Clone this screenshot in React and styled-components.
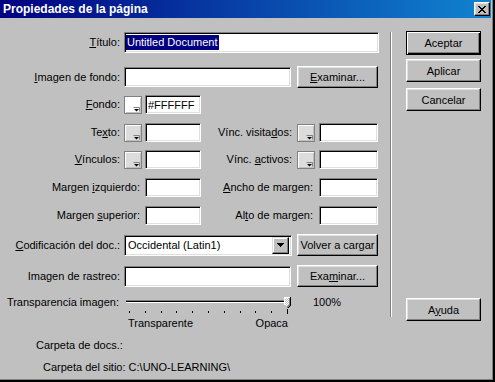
import React from 'react';
import styled, { createGlobalStyle, css } from 'styled-components';

const Global = createGlobalStyle`
  html, body { margin: 0; padding: 0; background: #c0c0c0; }
  body { font-family: "Liberation Sans", Arial, sans-serif; font-size: 11px; color: #000; }
`;

const Window = styled.div`
  box-sizing: border-box;
  width: 495px;
  height: 382px;
  display: flex;
  flex-direction: column;
  background: #c0c0c0;
  border-right: 2px solid #000;
  border-bottom: 2px solid #000;
  padding: 0 2px 2px 0;
  box-shadow: inset -1px -1px 0 #808080;
`;

const TitleBar = styled.div`
  flex: none;
  height: 18px;
  display: flex;
  align-items: center;
  justify-content: space-between;
  padding: 0 1px 0 3px;
  background: linear-gradient(to right, #000080, #1084d0);
  color: #fff;
  font-weight: bold;
  font-size: 12px;
`;

const TitleText = styled.span`
  white-space: nowrap;
`;

const CloseButton = styled.div`
  box-sizing: border-box;
  width: 16px;
  height: 14px;
  background: #c0c0c0;
  border: 1px solid;
  border-color: #fff #000 #000 #fff;
  box-shadow: inset -1px -1px 0 #808080, inset 1px 1px 0 #dfdfdf;
  display: flex;
  align-items: center;
  justify-content: center;
`;

const Body = styled.div`
  flex: 1;
  display: flex;
`;

const Main = styled.div`
  box-sizing: border-box;
  width: 390px;
  display: flex;
  flex-direction: column;
  padding-top: 14px;
`;

const Divider = styled.div`
  flex: none;
  width: 0;
  height: 285px;
  margin-top: 14px;
  border-left: 1px solid #808080;
  border-right: 1px solid #fff;
`;

const Side = styled.div`
  display: flex;
  flex-direction: column;
  padding: 13px 0 0 14px;
`;

const Row = styled.div`
  display: flex;
  align-items: ${p => p.$align || 'center'};
  height: ${p => p.$h}px;
  margin-top: ${p => p.$mt || 0}px;
`;

const Label = styled.div`
  box-sizing: border-box;
  flex: none;
  width: ${p => p.$w}px;
  padding-right: ${p => p.$pr ?? 4}px;
  text-align: right;
  white-space: nowrap;
  line-height: 13px;
`;

const U = styled.span`
  text-decoration: underline;
  text-underline-offset: 1px;
`;

const Field = styled.div`
  box-sizing: border-box;
  flex: none;
  width: ${p => p.$w}px;
  height: ${p => p.$h || 19}px;
  margin-left: ${p => p.$ml || 0}px;
  background: #fff;
  border: 1px solid;
  border-color: #808080 #fff #fff #808080;
  box-shadow: inset 1px 1px 0 #000, inset -1px -1px 0 #dfdfdf;
  padding: 0 2px;
  display: flex;
  align-items: center;
  white-space: nowrap;
  overflow: hidden;
`;

const Selected = styled.span`
  display: inline-block;
  margin-left: -1px;
  padding: 0 1px 0 1px;
  height: 15px;
  line-height: 15px;
  background: #000080;
  color: #fff;
`;

const SelectBox = styled(Field)`
  justify-content: space-between;
  padding: 0 2px 0 3px;
`;

const DropButton = styled.div`
  box-sizing: border-box;
  width: 17px;
  height: 17px;
  background: #c0c0c0;
  border: 1px solid;
  border-color: #dfdfdf #000 #000 #dfdfdf;
  box-shadow: inset -1px -1px 0 #808080, inset 1px 1px 0 #fff;
  display: flex;
  align-items: center;
  justify-content: center;
`;

const Swatch = styled.div`
  position: relative;
  box-sizing: border-box;
  flex: none;
  width: 18px;
  height: 18px;
  background: ${p => p.$fill};
  border: 1px solid #808080;
  box-shadow: inset 1px 1px 0 #fff, inset -1px -1px 0 #c0c0c0;
`;

const SwatchArrow = styled.svg`
  position: absolute;
  right: 1px;
  bottom: 1px;
`;

const Button = styled.div`
  box-sizing: border-box;
  flex: none;
  width: ${p => p.$w || 75}px;
  height: ${p => p.$h || 23}px;
  margin-top: ${p => p.$mt || 0}px;
  margin-left: ${p => p.$ml || 0}px;
  background: #c0c0c0;
  border: 1px solid;
  border-color: #fff #000 #000 #fff;
  box-shadow: inset -1px -1px 0 #808080, inset 1px 1px 0 #dfdfdf;
  display: flex;
  align-items: center;
  justify-content: center;
  white-space: nowrap;
  ${p => p.$default && css`
    border-color: #000;
    box-shadow: inset 1px 1px 0 #fff, inset -1px -1px 0 #000, inset -2px -2px 0 #808080;
  `}
`;

const SliderBlock = styled.div`
  position: relative;
  flex: none;
  width: 167px;
  display: flex;
  flex-direction: column;
`;

const Track = styled.div`
  box-sizing: border-box;
  width: 164px;
  height: 3px;
  margin: 4px 0 0 2px;
  background: #000;
  border-top: 1px solid #808080;
  border-bottom: 1px solid #fff;
`;

const Thumb = styled.svg`
  position: absolute;
  left: 160px;
  top: 1px;
`;

const Ticks = styled.div`
  display: flex;
  justify-content: space-between;
  align-items: center;
  width: 159px;
  height: 5px;
  margin: 6px 0 0 5px;
`;

const Tick = styled.div`
  width: 1px;
  height: ${p => (p.$long ? 5 : 2)}px;
  background: #000;
`;

const ScaleLabels = styled.div`
  display: flex;
  justify-content: space-between;
  margin-top: 3px;
  padding: 0 3px 0 4px;
  line-height: 13px;
`;

const Percent = styled.div`
  margin-left: 22px;
  line-height: 13px;
`;

const InfoLine = styled.div`
  margin-top: 9px;
  padding-left: ${p => p.$pl}px;
  line-height: 13px;
  white-space: nowrap;
`;

const Spacer = styled.div`
  height: ${p => p.$h}px;
`;

function ColorButton({ fill = '#dcdcdc' }) {
  return (
    <Swatch $fill={fill}>
      <SwatchArrow width="7" height="5" viewBox="0 0 7 5">
        <path d="M0.5 0.5 H6.5 V4.5" fill="none" stroke="#808080" />
        <path d="M1 2 H6 L3.5 4.5 Z" fill="#000" />
      </SwatchArrow>
    </Swatch>
  );
}

function ColorRow({ mt, left, right }) {
  return (
    <Row $h={19} $mt={mt}>
      <Label $w={124}>{left}</Label>
      <ColorButton />
      <Field $w={56} $ml={3} />
      <Label $w={96} $pr={5}>{right}</Label>
      <ColorButton />
      <Field $w={59} $ml={4} />
    </Row>
  );
}

function MarginRow({ mt, left, right }) {
  return (
    <Row $h={19} $mt={mt}>
      <Label $w={145} $pr={5}>{left}</Label>
      <Field $w={56} />
      <Label $w={118} $pr={6}>{right}</Label>
      <Field $w={59} />
    </Row>
  );
}

export default function App() {
  const ticks = Array.from({ length: 11 }, (_, i) => i);
  return (
    <>
      <Global />
      <Window>
        <TitleBar>
          <TitleText>Propiedades de la página</TitleText>
          <CloseButton>
            <svg width="8" height="7" viewBox="0 0 8 7" shapeRendering="crispEdges">
              <path d="M0 0h2v1h-2zM6 0h2v1h-2zM1 1h2v1h-2zM5 1h2v1h-2zM2 2h4v1h-4zM3 3h2v1h-2zM2 4h4v1h-4zM1 5h2v1h-2zM5 5h2v1h-2zM0 6h2v1h-2zM6 6h2v1h-2z" fill="#000" />
            </svg>
          </CloseButton>
        </TitleBar>
        <Body>
          <Main>
            <Row $h={21}>
              <Label $w={124}><U>T</U>ítulo:</Label>
              <Field $w={255} $h={21}><Selected>Untitled Document</Selected></Field>
            </Row>
            <Row $h={22} $mt={13}>
              <Label $w={124}><U>I</U>magen de fondo:</Label>
              <Field $w={167} $h={20} />
              <Button $w={81} $h={22} $ml={6}><U>E</U>xaminar...</Button>
            </Row>
            <Row $h={19} $mt={7}>
              <Label $w={124}><U>F</U>ondo:</Label>
              <ColorButton fill="#ffffff" />
              <Field $w={56} $ml={3}>#FFFFFF</Field>
            </Row>
            <ColorRow mt={9} left={<>Te<U>x</U>to:</>} right={<>Vínc. visita<U>d</U>os:</>} />
            <ColorRow mt={8} left={<><U>V</U>ínculos:</>} right={<>Vínc. <U>a</U>ctivos:</>} />
            <MarginRow mt={9} left={<>Margen <U>i</U>zquierdo:</>} right={<><U>A</U>ncho de margen:</>} />
            <MarginRow mt={9} left={<>Margen <U>s</U>uperior:</>} right={<>Al<U>t</U>o de margen:</>} />
            <Row $h={22} $mt={9}>
              <Label $w={124}><U>C</U>odificación del doc.:</Label>
              <SelectBox $w={168} $h={21}>
                <span>Occidental (Latin1)</span>
                <DropButton>
                  <svg width="7" height="4" viewBox="0 0 7 4" shapeRendering="crispEdges">
                    <path d="M0 0h7v1h-7zM1 1h5v1h-5zM2 2h3v1h-3zM3 3h1v1h-1z" fill="#000" />
                  </svg>
                </DropButton>
              </SelectBox>
              <Button $w={81} $h={22} $ml={5}>Volver a cargar</Button>
            </Row>
            <Row $h={22} $mt={9}>
              <Label $w={124}>Imagen de rastreo:</Label>
              <Field $w={167} $h={21} />
              <Button $w={81} $h={22} $ml={6}>Exa<U>m</U>inar...</Button>
            </Row>
            <Row $h={34} $mt={9} $align="flex-start">
              <Label $w={124} $pr={5}>Transparencia imagen:</Label>
              <SliderBlock>
                <Track />
                <Thumb width="7" height="11" viewBox="0 0 7 11" shapeRendering="crispEdges">
                  <defs>
                    <pattern id="dither" width="2" height="2" patternUnits="userSpaceOnUse">
                      <rect width="2" height="2" fill="#c0c0c0" />
                      <rect width="1" height="1" fill="#fff" />
                      <rect x="1" y="1" width="1" height="1" fill="#fff" />
                    </pattern>
                  </defs>
                  <path d="M0 0H6V8L3 11L0 8Z" fill="url(#dither)" />
                  <path d="M0.5 8V0.5H5.5" fill="none" stroke="#fff" />
                  <path d="M6.5 0V8.5L3.5 11" fill="none" stroke="#000" />
                  <path d="M5.5 1V8L3 10.5" fill="none" stroke="#808080" />
                </Thumb>
                <Ticks>
                  {ticks.map(i => <Tick key={i} $long={i === 10} />)}
                </Ticks>
                <ScaleLabels>
                  <span>Transparente</span>
                  <span>Opaca</span>
                </ScaleLabels>
              </SliderBlock>
              <Percent>100%</Percent>
            </Row>
            <InfoLine $pl={36}>Carpeta de docs.:</InfoLine>
            <InfoLine $pl={43}>Carpeta del sitio: C:\UNO-LEARNING\</InfoLine>
          </Main>
          <Divider />
          <Side>
            <Button $default $h={24}>Aceptar</Button>
            <Button $mt={4}>Aplicar</Button>
            <Button $mt={6}>Cancelar</Button>
            <Spacer $h={187} />
            <Button>A<U>y</U>uda</Button>
          </Side>
        </Body>
      </Window>
    </>
  );
}
